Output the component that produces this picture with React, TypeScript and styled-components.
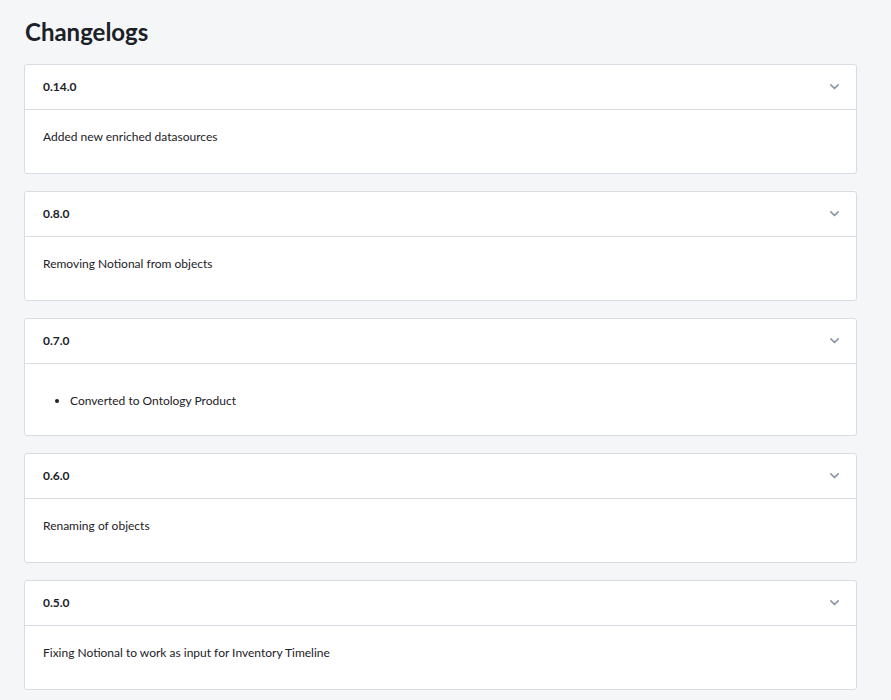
import React from "react";
import styled, { createGlobalStyle } from "styled-components";

type Entry = {
  version: string;
  notes: string[];
  list?: boolean;
};

const entries: Entry[] = [
  { version: "0.14.0", notes: ["Added new enriched datasources"] },
  { version: "0.8.0", notes: ["Removing Notional from objects"] },
  { version: "0.7.0", notes: ["Converted to Ontology Product"], list: true },
  { version: "0.6.0", notes: ["Renaming of objects"] },
  { version: "0.5.0", notes: ["Fixing Notional to work as input for Inventory Timeline"] },
];

const GlobalStyle = createGlobalStyle`
  html, body {
    margin: 0;
    padding: 0;
    background: #f5f6f8;
    font-family: Lato, "Noto Sans", sans-serif;
    color: #1c2127;
  }
`;

const Page = styled.div`
  padding: 15px 34px 20px 24px;
`;

const Title = styled.h1`
  margin: 0 0 15px 1px;
  font-size: 24px;
  line-height: 34px;
  font-weight: 700;
  color: #1c2127;
`;

const List = styled.div`
  display: flex;
  flex-direction: column;
  gap: 17px;
`;

const Card = styled.section`
  background: #fff;
  border: 1px solid #d9dde3;
  border-radius: 3px;
`;

const Header = styled.div`
  display: flex;
  align-items: center;
  justify-content: space-between;
  height: 45px;
  box-sizing: border-box;
  padding: 0 15px 2px 18px;
  border-bottom: 1px solid #d9dde3;
  font-size: 12px;
  font-weight: 700;
`;

const Body = styled.div<{ $list?: boolean }>`
  min-height: 63px;
  box-sizing: border-box;
  padding: ${(p) => (p.$list ? "25px 18px 22px" : "19px 18px 0")};
  font-size: 12px;
  line-height: 16px;
`;

const Bullets = styled.ul`
  margin: 0;
  padding-left: 27px;
  li {
    line-height: 24px;
  }
`;

const Chevron = () => (
  <svg width="13" height="13" viewBox="0 0 16 16" fill="none">
    <path d="M3.5 6l4.5 4.5L12.5 6" stroke="#8a94a6" strokeWidth="2" strokeLinecap="round" strokeLinejoin="round" />
  </svg>
);

export default function App() {
  return (
    <>
      <GlobalStyle />
      <Page>
        <Title>Changelogs</Title>
        <List>
          {entries.map((e) => (
            <Card key={e.version}>
              <Header>
                <span>{e.version}</span>
                <Chevron />
              </Header>
              <Body $list={e.list}>
                {e.list ? (
                  <Bullets>
                    {e.notes.map((n) => (
                      <li key={n}>{n}</li>
                    ))}
                  </Bullets>
                ) : (
                  <span>{e.notes[0]}</span>
                )}
              </Body>
            </Card>
          ))}
        </List>
      </Page>
    </>
  );
}
